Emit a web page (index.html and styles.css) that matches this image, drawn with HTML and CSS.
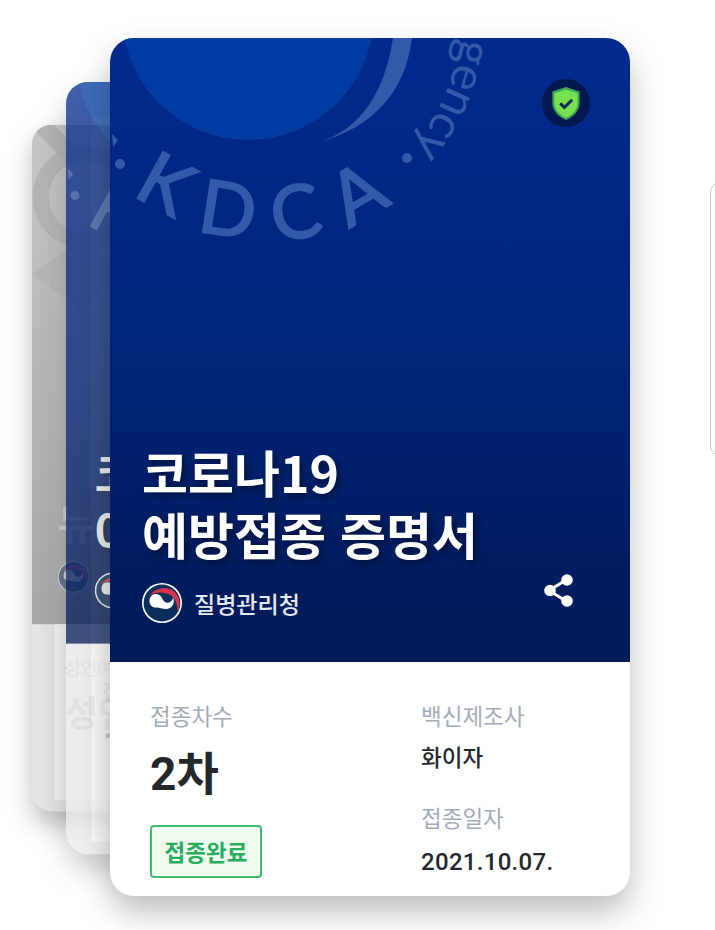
FILE: index.html
```html
<!DOCTYPE html>
<html lang="ko">
<head>
<meta charset="utf-8">
<title>코로나19 예방접종 증명서</title>
<link rel="stylesheet" href="styles.css">
</head>
<body>
<main class="stage">
  <svg class="defs" width="0" height="0" aria-hidden="true">
    <defs>
      <path id="arc-bottom" d="M -60 -18 A 220 220 0 0 0 380 -18"/>
      <path id="arc-right" d="M 160 -208 A 190 190 0 0 1 255 146.5"/>
      <symbol id="seal" viewBox="0 0 520 624">
        <circle class="seal-disc" cx="138" cy="-24" r="126"/>
        <path class="seal-mark" d="M 210 104 Q 270 84 283 0 L 302 0 Q 292 80 210 104 Z"/>
        <path class="seal-mark" d="M 2 96 L 8 102 L 3 109 Z"/>
        <circle class="seal-mark" cx="10" cy="126" r="5"/>
        <circle class="seal-mark" cx="297" cy="120" r="5"/>
        <text class="seal-caps"><textPath href="#arc-bottom" startOffset="198">KDCA</textPath></text>
        <text class="seal-small" text-anchor="end"><textPath href="#arc-right" startOffset="436">gency</textPath></text>
      </symbol>
      <symbol id="emblem" viewBox="0 0 40 40">
        <circle cx="20" cy="20" r="20" fill="#fff"/>
        <circle cx="20" cy="20" r="18.4" fill="#0b2f5c"/>
        <path d="M 7 13 C 14 3 32 1 37 16 C 38 20 38 24 36 29 C 35.500 23 34 16 30 13 C 24 9 14 8 7 13 Z" fill="#d8324e"/>
        <path d="M 7.500 18 A 6.500 6.500 0 0 1 20 15 C 21.500 19 25 21 28 19 C 30 18 31 16 31 14 C 33.500 20 30 26 24 26 C 20 26 18 24.500 14 24.500 C 10 24.500 7.500 22 7.500 18 Z" fill="#fff"/>
      </symbol>
      <symbol id="share" viewBox="0 0 32 32">
        <path d="M 23 6 L 6 16.500 L 23 27" fill="none" stroke="#fff" stroke-width="3"/>
        <circle cx="24" cy="6" r="5.800" fill="#fff"/>
        <circle cx="7" cy="16.500" r="5.800" fill="#fff"/>
        <circle cx="24" cy="27" r="5.800" fill="#fff"/>
      </symbol>
    </defs>
  </svg>

  <div class="peek"></div>

  <article class="card card--far">
    <div class="hero">
      <svg class="seal seal--far" viewBox="0 0 520 624" aria-hidden="true">
        <line x1="8" y1="-4" x2="50" y2="38"/>
        <circle cx="66" cy="90" r="55"/>
        <polygon points="1,187 60,143 120,187 60,231"/>
      </svg>
      <div class="hero-body">
        <h2 class="title">&nbsp;<br>뉴</h2>
        <div class="org-row">
          <div class="org"><svg class="emblem"><use href="#emblem"/></svg><span class="org-name">질병관리청</span></div>
        </div>
      </div>
    </div>
    <div class="info">
      <div class="col col--left">
        <div class="label">성인여부</div>
        <div class="value">성인</div>
      </div>
    </div>
  </article>

  <article class="card card--mid">
    <div class="hero">
      <svg class="seal" viewBox="0 0 520 624" aria-hidden="true"><use href="#seal"/></svg>
      <div class="hero-body">
        <h2 class="title">코로나19<br>0차 접종</h2>
        <div class="org-row">
          <div class="org"><svg class="emblem"><use href="#emblem"/></svg><span class="org-name">질병관리청</span></div>
        </div>
      </div>
    </div>
    <div class="info">
      <div class="col col--left">
        <div class="label">접종차수</div>
        <div class="value">1차</div>
      </div>
    </div>
  </article>

  <article class="card card--front">
    <div class="hero">
      <svg class="seal" viewBox="0 0 520 624" aria-hidden="true"><use href="#seal"/></svg>
      <div class="shield-badge">
        <svg class="shield" viewBox="0 0 30 35" aria-hidden="true">
          <path class="shield-edge" d="M 15 1 L 28.600 5.600 L 28.600 17 C 28.600 25 22 31 15 34 C 8 31 1.400 25 1.400 17 L 1.400 5.600 Z"/>
          <path class="shield-fill" d="M 15 3.400 L 26.600 7.200 L 26.600 17 C 26.600 24 21 29 15 31.800 C 9 29 3.400 24 3.400 17 L 3.400 7.200 Z"/>
          <path class="shield-check" d="M 9.200 17.400 L 13.400 21.400 L 21.200 13.800"/>
        </svg>
      </div>
      <div class="hero-body">
        <h1 class="title">코로나19<br>예방접종 증명서</h1>
        <div class="org-row">
          <div class="org"><svg class="emblem"><use href="#emblem"/></svg><span class="org-name">질병관리청</span></div>
          <svg class="share"><use href="#share"/></svg>
        </div>
      </div>
    </div>
    <div class="info">
      <div class="col col--left">
        <div class="label">접종차수</div>
        <div class="value">2차</div>
        <div class="status">접종완료</div>
      </div>
      <div class="col col--right">
        <div class="label">백신제조사</div>
        <div class="detail">화이자</div>
        <div class="label label--gap">접종일자</div>
        <div class="detail detail--date">2021.10.07.</div>
      </div>
    </div>
  </article>
</main>
</body>
</html>
```
FILE: styles.css
```css
* { box-sizing: border-box; }
html, body { margin: 0; height: 100%; background: #fff; }
body {
  overflow: hidden;
  font-family: "Noto Sans CJK KR", Roboto, sans-serif;
}
.stage { position: relative; width: 715px; height: 930px; overflow: hidden; }
.defs { position: absolute; }

.peek {
  position: absolute;
  left: 710px;
  top: 182px;
  width: 20px;
  height: 274px;
  border: 1.5px solid #cbcbcb;
  border-radius: 12px;
  background: #fff;
}

.card {
  position: absolute;
  width: 520px;
  height: 858px;
  border-radius: 24px;
  overflow: hidden;
  transform-origin: 0 0;
  background: #fff;
  box-shadow: 0 16px 32px rgba(0, 0, 0, .26);
  display: flex;
  flex-direction: column;
}
.card--front { left: 110px; top: 38px; }
.card--mid {
  left: 66px;
  top: 82px;
  transform: scale(.9);
  opacity: .75;
  background: #ebebeb;
}
.card--far {
  left: 32px;
  top: 125px;
  transform: scale(.8);
  background: #e4e4e4;
}
.card--mid::after,
.card--far::after {
  content: "";
  position: absolute;
  left: 28px;
  right: 0;
  top: 38px;
  bottom: 14px;
  background: linear-gradient(180deg, rgba(255, 255, 255, .04) 586px, rgba(255, 255, 255, .7) 586px);
  pointer-events: none;
}
.card--far::after {
  background: linear-gradient(180deg, rgba(255, 255, 255, .04) 586px, rgba(255, 255, 255, .5) 586px);
}

.hero {
  position: relative;
  flex: 0 0 624px;
  background: linear-gradient(180deg, #012a8e 0%, #01247a 50%, #011a56 100%);
  overflow: hidden;
  display: flex;
  flex-direction: column;
  justify-content: flex-end;
}
.card--far .hero { background: linear-gradient(180deg, #c6c6c6 0%, #a8a8a8 100%); }

.seal { position: absolute; left: 0; top: 0; width: 520px; height: 624px; overflow: visible; }
.seal-disc { fill: #003ba1; }
.seal-mark { fill: #3459a8; }
.seal-caps {
  font-family: Lato, sans-serif;
  font-size: 74px;
  letter-spacing: 24px;
  fill: #3459a8;
  stroke: #3459a8;
  stroke-width: 2px;
}
.seal-small {
  font-family: Lato, sans-serif;
  font-size: 48px;
  letter-spacing: -1px;
  fill: #3459a8;
}
.seal--far line { stroke: #b4b4b4; stroke-width: 22; }
.seal--far circle { fill: none; stroke: #b4b4b4; stroke-width: 20; }
.seal--far polygon { fill: #b6b6b6; }

.shield-badge {
  position: absolute;
  left: 432px;
  top: 41px;
  width: 48px;
  height: 48px;
  border-radius: 50%;
  background: #02184f;
  display: flex;
  align-items: center;
  justify-content: center;
}
.shield { width: 30px; height: 35px; }
.shield-edge { fill: #3aa656; }
.shield-fill { fill: #77e04f; }
.shield-check { fill: none; stroke: #0b2a55; stroke-width: 3; }

.hero-body {
  position: relative;
  padding: 0 32px 39px;
  display: flex;
  flex-direction: column;
}
.title {
  margin: 0;
  font-size: 50px;
  font-weight: 700;
  line-height: 62px;
  color: #fff;
  text-shadow: 3px 3px 7px rgba(0, 0, 0, .45);
}
.org-row {
  margin-top: 19px;
  display: flex;
  align-items: center;
  justify-content: space-between;
  height: 40px;
}
.org { display: flex; align-items: center; gap: 12px; }
.emblem { width: 40px; height: 40px; display: block; }
.org-name { font-size: 23px; font-weight: 500; color: #e6e9f2; line-height: 40px; }
.share { width: 32px; height: 34px; margin-right: 23px; margin-top: -26px; display: block; }

.info {
  flex: 1;
  display: flex;
  padding: 36px 40px 0;
}
.col { display: flex; flex-direction: column; align-items: flex-start; }
.col--left { width: 271px; }
.label { font-size: 22.5px; line-height: 34px; color: #a3abb9; }
.label--gap { margin-top: 27px; }
.value {
  margin-top: 9px;
  font-size: 46px;
  font-weight: 700;
  line-height: 66px;
  color: #24272e;
  font-family: Roboto, "Noto Sans CJK KR", sans-serif;
}
.status {
  margin-top: 18px;
  width: 112px;
  height: 53px;
  border: 2px solid #3ebb6b;
  border-radius: 4px;
  background: #f0fdee;
  color: #27ad5f;
  font-size: 22.5px;
  font-weight: 700;
  line-height: 49px;
  text-align: center;
}
.detail {
  margin-top: 7px;
  font-size: 22.5px;
  font-weight: 500;
  line-height: 34px;
  color: #24272e;
}
.detail--date {
  margin-top: 11px;
  font-family: Roboto, sans-serif;
  font-size: 24px;
  letter-spacing: .3px;
}

.card--far .title { color: #cdcdcd; text-shadow: none; }
.card--far .label, .card--far .value { color: #84888c; }
.card--far .emblem { opacity: .45; }
.card--far .org-name { display: none; }
```
